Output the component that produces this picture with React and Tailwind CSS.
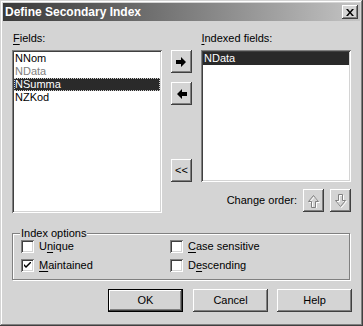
import React from "react";

const raised =
  "shadow-[inset_-1px_-1px_#404040,inset_1px_1px_#ffffff,inset_-2px_-2px_#808080,inset_2px_2px_#d4d4d4]";
const sunken =
  "shadow-[inset_1px_1px_#808080,inset_-1px_-1px_#ffffff,inset_2px_2px_#404040,inset_-2px_-2px_#d4d4d4]";

function U({ children }) {
  return <span className="underline underline-offset-[2px]">{children}</span>;
}

function ArrowRight() {
  return (
    <svg width="11" height="10" viewBox="0 0 11 10">
      <polygon points="0,3 5,3 5,0 10,5 5,10 5,7 0,7" fill="#000" />
    </svg>
  );
}
function ArrowLeft() {
  return (
    <svg width="11" height="10" viewBox="0 0 11 10">
      <polygon points="11,3 6,3 6,0 1,5 6,10 6,7 11,7" fill="#000" />
    </svg>
  );
}
function UpHollow() {
  return (
    <svg width="13" height="14" viewBox="0 0 13 14">
      <path d="M4.5 13.5 V7.5 H1.5 L6.5 1.5 L11.5 7.5 H8.5 V13.5 Z" fill="none" stroke="#ffffff" transform="translate(1 1)" />
      <path d="M4.5 13.5 V7.5 H1.5 L6.5 1.5 L11.5 7.5 H8.5 V13.5 Z" fill="none" stroke="#808080" />
    </svg>
  );
}
function DownHollow() {
  return (
    <svg width="13" height="14" viewBox="0 0 13 14">
      <path d="M4.5 0.5 V6.5 H1.5 L6.5 12.5 L11.5 6.5 H8.5 V0.5 Z" fill="none" stroke="#ffffff" transform="translate(1 1)" />
      <path d="M4.5 0.5 V6.5 H1.5 L6.5 12.5 L11.5 6.5 H8.5 V0.5 Z" fill="none" stroke="#808080" />
    </svg>
  );
}

function Btn({ className = "", children }) {
  return (
    <div className={`flex items-center justify-center bg-[#d4d4d4] ${raised} ${className}`}>
      {children}
    </div>
  );
}

function Check({ checked, label }) {
  return (
    <div className="flex items-center h-[13px]">
      <div className={`w-[13px] h-[13px] bg-white ${sunken} flex items-center justify-center`}>
        {checked && (
          <svg width="7" height="7" viewBox="0 0 7 7">
            <path d="M0 2 L0 4 L2 6 L7 1 L7 -1 L2 4 Z" fill="#000" />
          </svg>
        )}
      </div>
      <span className="ml-[5px] leading-[13px]">{label}</span>
    </div>
  );
}

export default function App() {
  return (
    <div
      className="w-[363px] h-[326px] bg-[#d4d4d4] flex flex-col text-[11px] text-black shadow-[inset_-1px_-1px_#404040,inset_1px_1px_#d4d4d4,inset_-2px_-2px_#808080,inset_2px_2px_#ffffff]"
      style={{ fontFamily: '"Liberation Sans", Arial, sans-serif' }}
    >
      {/* Title bar */}
      <div className="mt-[3px] mx-[3px] h-[18px] flex items-center bg-linear-to-r from-[#3a3a3a] to-[#c4c4c4]">
        <span className="pl-[2px] text-white font-bold text-[12px] leading-[18px]">Define Secondary Index</span>
        <div className={`ml-auto mr-[2px] w-[16px] h-[14px] bg-[#d4d4d4] ${raised} flex items-center justify-center`}>
          <svg width="8" height="7" viewBox="0 0 8 7">
            <path d="M0 0 H2 L4 2.5 L6 0 H8 L5 3.5 L8 7 H6 L4 4.5 L2 7 H0 L3 3.5 Z" fill="#000" />
          </svg>
        </div>
      </div>

      {/* Labels */}
      <div className="mt-[11px] h-[13px] flex leading-[13px]">
        <span className="ml-[13px]"><U>F</U>ields:</span>
        <span className="ml-[156px]"><U>I</U>ndexed fields:</span>
      </div>

      {/* Main row */}
      <div className="mt-[5px] flex items-start pl-[12px]">
        <div className={`w-[150px] h-[163px] bg-white ${sunken} pt-[2px] px-[2px] flex flex-col leading-[13px]`}>
          <div className="h-[13px] pl-[1px]">NNom</div>
          <div className="h-[13px] pl-[1px] text-[#808080]">NData</div>
          <div className="h-[13px] pl-[1px] bg-[#2a2a2a] text-white outline outline-1 outline-dotted outline-[#d0d0d0] -outline-offset-1">NSumma</div>
          <div className="h-[13px] pl-[1px]">NZKod</div>
        </div>

        <div className="ml-[9px] flex flex-col">
          <Btn className="w-[21px] h-[23px]"><ArrowRight /></Btn>
          <Btn className="w-[21px] h-[23px] mt-[9px]"><ArrowLeft /></Btn>
          <Btn className="w-[21px] h-[23px] mt-[54px] leading-[11px] pb-[1px]">&lt;&lt;</Btn>
        </div>

        <div className="ml-[9px] flex flex-col">
          <div className={`w-[150px] h-[132px] bg-white ${sunken} pt-[2px] px-[2px] flex flex-col leading-[13px]`}>
            <div className="h-[13px] pl-[1px] bg-[#2a2a2a] text-white">NData</div>
          </div>
          <div className="mt-[7px] flex items-center justify-end h-[23px]">
            <span className="mr-[6px]">Change order:</span>
            <Btn className="w-[21px] h-[23px]"><UpHollow /></Btn>
            <Btn className="w-[21px] h-[23px] ml-[6px]"><DownHollow /></Btn>
          </div>
        </div>
      </div>

      {/* Group box */}
      <div className="mt-[20px] ml-[12px] w-[338px] h-[47px] relative border border-[#808080] shadow-[inset_1px_1px_#ffffff,1px_1px_#ffffff]">
        <span className="absolute left-[7px] -top-[7px] px-[1px] bg-[#d4d4d4] leading-[13px]">Index options</span>
        <div className="flex pt-[6px] pl-[8px]">
          <div className="flex flex-col gap-[6px] w-[149px]">
            <Check label={<>U<U>n</U>ique</>} />
            <Check checked label={<><U>M</U>aintained</>} />
          </div>
          <div className="flex flex-col gap-[6px]">
            <Check label={<><U>C</U>ase sensitive</>} />
            <Check label={<>D<U>e</U>scending</>} />
          </div>
        </div>
      </div>

      {/* Buttons */}
      <div className="mt-[9px] flex pl-[108px]">
        <div className="w-[75px] h-[23px] border border-black">
          <Btn className="w-full h-full">OK</Btn>
        </div>
        <Btn className="w-[75px] h-[23px] ml-[10px]">Cancel</Btn>
        <Btn className="w-[75px] h-[23px] ml-[9px]">Help</Btn>
      </div>
    </div>
  );
}
